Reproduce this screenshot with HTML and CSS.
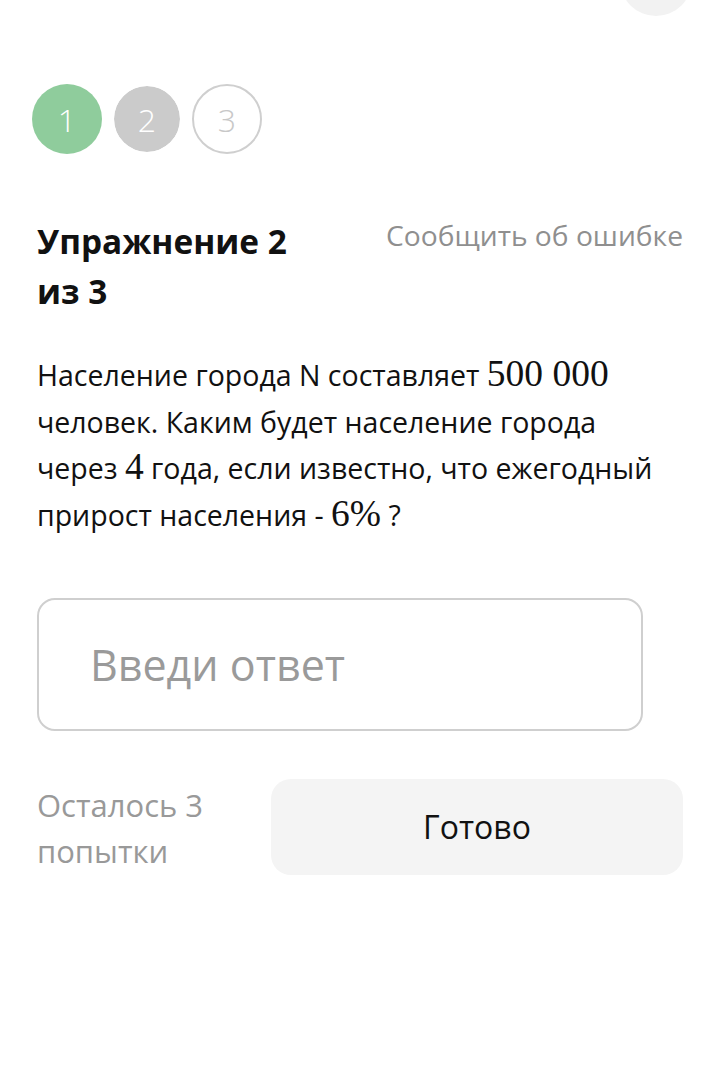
FILE: index.html
```html
<!DOCTYPE html>
<html lang="ru">
<head>
<meta charset="utf-8">
<title>Упражнение 2 из 3</title>
<link rel="stylesheet" href="styles.css">
</head>
<body>
<header class="topbar">
  <div class="top-btn"></div>
</header>
<div class="steps">
  <div class="step step-done">1</div>
  <div class="step step-current">2</div>
  <div class="step step-next">3</div>
</div>
<section class="task">
  <div class="task-head">
    <h1 class="task-title">Упражнение 2 из 3</h1>
    <a class="report" href="#">Сообщить об ошибке</a>
  </div>
  <p class="task-text">Население города N составляет <span class="math">500&nbsp;000</span> человек. Каким будет население города через <span class="math">4</span> года, если известно, что ежегодный прирост населения - <span class="math">6%</span> ?</p>
  <div class="answer">
    <input class="answer-input" type="text" placeholder="Введи ответ">
  </div>
  <div class="actions">
    <div class="attempts">Осталось 3 попытки</div>
    <button class="done" type="button">Готово</button>
  </div>
</section>
</body>
</html>
```

FILE: styles.css
```css
* { box-sizing: border-box; }
html, body { margin: 0; padding: 0; background: #fff; }
body {
  font-family: "Open Sans", "Noto Sans", sans-serif;
  color: #111;
}
.topbar {
  display: flex;
  justify-content: flex-end;
  height: 72px;
  margin-top: -56px;
  padding: 0 21px 0 0;
}
.top-btn {
  width: 72px;
  height: 72px;
  border-radius: 50%;
  background: #f2f2f2;
}
.steps {
  display: flex;
  gap: 10px;
  padding-left: 32px;
  margin-top: 68px;
}
.step {
  width: 70px;
  height: 70px;
  border-radius: 50%;
  display: flex;
  align-items: center;
  justify-content: center;
  font-size: 32px;
  font-weight: 300;
  color: #fff;
}
.step-done { background: #8fcc9c; }
.step-current {
  background: #cbcbcb;
  border: 2px solid #fff;
  background-clip: padding-box;
}
.step-next {
  border: 2px solid #cfcfcf;
  color: #c8c8c8;
}
.task {
  padding: 0 30px 0 37px;
}
.task-head {
  display: flex;
  justify-content: space-between;
  align-items: flex-start;
  margin-top: 62px;
}
.task-title {
  margin: 0;
  font-size: 33.4px;
  line-height: 50px;
  font-weight: 700;
  color: #111;
  width: 270px;
}
.report {
  font-size: 28.2px;
  line-height: 38px;
  color: #8f8f8f;
  text-decoration: none;
  white-space: nowrap;
}
.task-text {
  margin: 36px 0 0;
  max-width: 630px;
  font-size: 28.5px;
  line-height: 46.7px;
  color: #111;
}
.math {
  font-family: "Liberation Serif", "DejaVu Serif", serif;
  font-size: 37.5px;
  line-height: 1;
}
.answer {
  margin-top: 59px;
  width: 606px;
}
.answer-input {
  width: 100%;
  height: 133px;
  border: 2px solid #cfcfcf;
  border-radius: 18px;
  padding: 0 0 0 51px;
  font-family: "Open Sans", "Noto Sans", sans-serif;
  font-size: 43px;
  color: #111;
  background: #fff;
  outline: none;
}
.answer-input::placeholder { color: #9a9a9a; }
.actions {
  display: flex;
  align-items: flex-start;
  margin-top: 48px;
}
.attempts {
  flex: 0 0 234px;
  font-size: 31px;
  line-height: 46px;
  color: #999;
  padding-top: 3px;
  padding-right: 20px;
}
.done {
  flex: 1;
  height: 96px;
  border: none;
  border-radius: 20px;
  background: #f4f4f4;
  font-family: "Open Sans", "Noto Sans", sans-serif;
  font-size: 32px;
  color: #111;
}
```
